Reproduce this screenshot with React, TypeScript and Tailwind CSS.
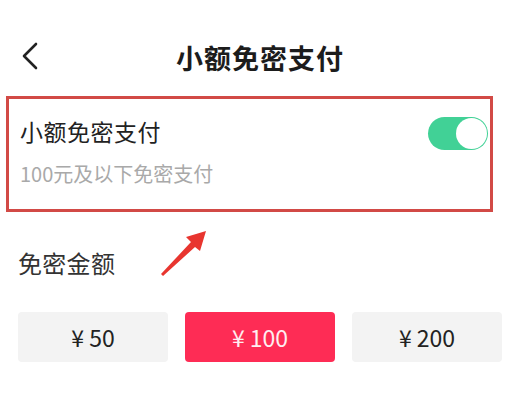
const amounts = ["50", "100", "200"];

const App = () => {
  const selected = "100";

  return (
    <div
      className="relative w-[510px] h-[400px] bg-white overflow-hidden"
      style={{ fontFamily: '"Noto Sans CJK SC", "Noto Sans", sans-serif' }}
    >
      {/* Header */}
      <div className="relative flex items-center justify-center h-[50px] mt-[32px]">
        <svg
          className="absolute left-[18px] top-[9px]"
          width="24"
          height="30"
          viewBox="0 0 24 30"
          fill="none"
        >
          <polyline
            points="18,3 6,15 18,27"
            stroke="#222"
            strokeWidth="2.6"
            strokeLinecap="round"
            strokeLinejoin="round"
          />
        </svg>
        <h1 className="ml-[10px] text-[27px] font-bold text-[#1c1c1c] leading-none tracking-[1px]">
          小额免密支付
        </h1>
      </div>

      {/* Highlighted setting */}
      <div className="ml-[6px] mt-[14px] w-[487px] h-[116px] border-[3px] border-[#d24a46] flex items-start justify-between">
        <div className="pl-[11px] pt-[21px]">
          <p className="text-[23px] leading-none text-[#222] tracking-[0.5px]">
            小额免密支付
          </p>
          <p className="mt-[21px] text-[20px] leading-none text-[#a9a9a9]">
            100元及以下免密支付
          </p>
        </div>
        <div className="mt-[18px] mr-[2px] w-[60px] h-[33px] rounded-full bg-[#41d196] flex items-center justify-end pr-[1px]">
          <div className="w-[31px] h-[31px] rounded-full bg-white" />
        </div>
      </div>

      {/* Amount */}
      <p className="ml-[18px] mt-[39px] text-[24px] leading-none text-[#333] tracking-[0.3px]">
        免密金额
      </p>

      <div className="ml-[18px] mt-[37px] w-[484px] grid grid-cols-3 gap-[17px]">
        {amounts.map((a) => (
          <div
            key={a}
            className={`h-[50px] rounded-[4px] flex items-center justify-center text-[23px] ${
              a === selected
                ? "bg-[#fe2c55] text-[#ffeef1]"
                : "bg-[#f3f3f3] text-[#222]"
            }`}
          >
            ¥ {a}
          </div>
        ))}
      </div>

      {/* Annotation arrow */}
      <svg
        className="absolute left-[155px] top-[225px]"
        width="60"
        height="56"
        viewBox="0 0 60 56"
      >
        <polygon
          points="51,6 31,12 36,17 6,49 8,51 40,22 45,26"
          fill="#e8352f"
        />
      </svg>
    </div>
  );
};

export default App;
